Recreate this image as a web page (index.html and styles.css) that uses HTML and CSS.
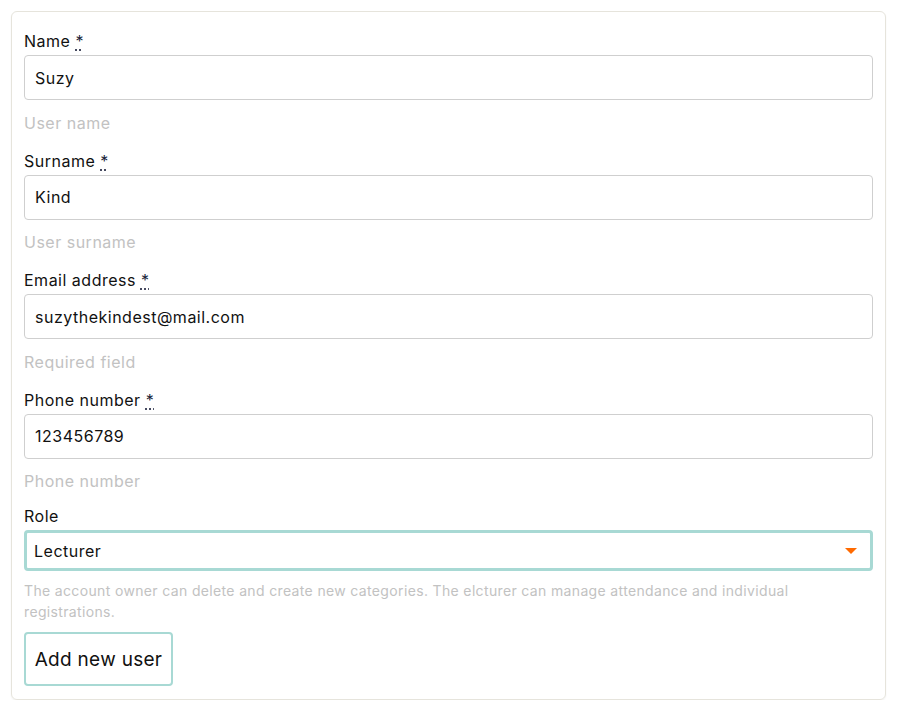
FILE: index.html
```html
<!DOCTYPE html>
<html lang="en">
<head>
<meta charset="utf-8">
<title>Add user</title>
<link rel="stylesheet" href="styles.css">
</head>
<body>
<form class="card">
  <div class="field">
    <label class="label">Name <abbr class="req" title="required">*</abbr></label>
    <div class="input">Suzy</div>
    <div class="help">User name</div>
  </div>
  <div class="field">
    <label class="label">Surname <abbr class="req" title="required">*</abbr></label>
    <div class="input">Kind</div>
    <div class="help">User surname</div>
  </div>
  <div class="field">
    <label class="label">Email address <abbr class="req" title="required">*</abbr></label>
    <div class="input">suzythekindest@mail.com</div>
    <div class="help">Required field</div>
  </div>
  <div class="field">
    <label class="label">Phone number <abbr class="req" title="required">*</abbr></label>
    <div class="input">123456789</div>
    <div class="help last">Phone number</div>
  </div>
  <div class="field">
    <label class="label">Role</label>
    <div class="select"><span>Lecturer</span><span class="caret"></span></div>
    <div class="help small">The account owner can delete and create new categories. The elcturer can manage attendance and individual registrations.</div>
  </div>
  <div class="actions"><button type="button" class="btn">Add new user</button></div>
</form>
</body>
</html>
```
FILE: styles.css
```css
* { box-sizing: border-box; }
html, body { margin: 0; background: #fff; }
body {
  padding: 11px 17px 0 11px;
  font-family: "Inter", "Liberation Sans", sans-serif;
  color: #111;
  letter-spacing: 0.5px;
}
.card {
  border: 1px solid #e6e4dc;
  border-radius: 6px;
  box-shadow: 0 1px 2px rgba(0,0,0,0.06);
  padding: 17px 12px 13px 12px;
}
.field { display: flex; flex-direction: column; }
.label { font-size: 16px; line-height: 24px; margin-bottom: 2px; }
.req { text-decoration: underline dotted; text-underline-offset: 3px; color: #1a1f3a; }
.input {
  height: 45px;
  border: 1px solid #cfcfcf;
  border-radius: 4px;
  padding: 0 10px;
  font-size: 16px;
  display: flex; align-items: center;
}
.help {
  color: #c2c2c2;
  font-size: 16px;
  line-height: 24px;
  margin: 10.5px 0 14px;
}
.help.last { margin-bottom: 11px; }
.help.small { font-size: 14px; line-height: 21px; margin: 9px 0 10px; letter-spacing: 0.35px; }
.select {
  height: 41px;
  border: 3px solid #a8d9d4;
  border-radius: 4px;
  padding: 0 13px 0 7px;
  font-size: 16px;
  display: flex; align-items: center; justify-content: space-between;
}
.caret {
  width: 0; height: 0;
  border-left: 6px solid transparent;
  border-right: 6px solid transparent;
  border-top: 6px solid #ff6a00;
}
.btn {
  font-family: inherit;
  font-size: 19px;
  letter-spacing: 0.3px;
  color: #111;
  background: #fff;
  border: 2px solid #a8d9d4;
  border-radius: 4px;
  height: 54px;
  width: 149px;
  padding: 0;
}
```
